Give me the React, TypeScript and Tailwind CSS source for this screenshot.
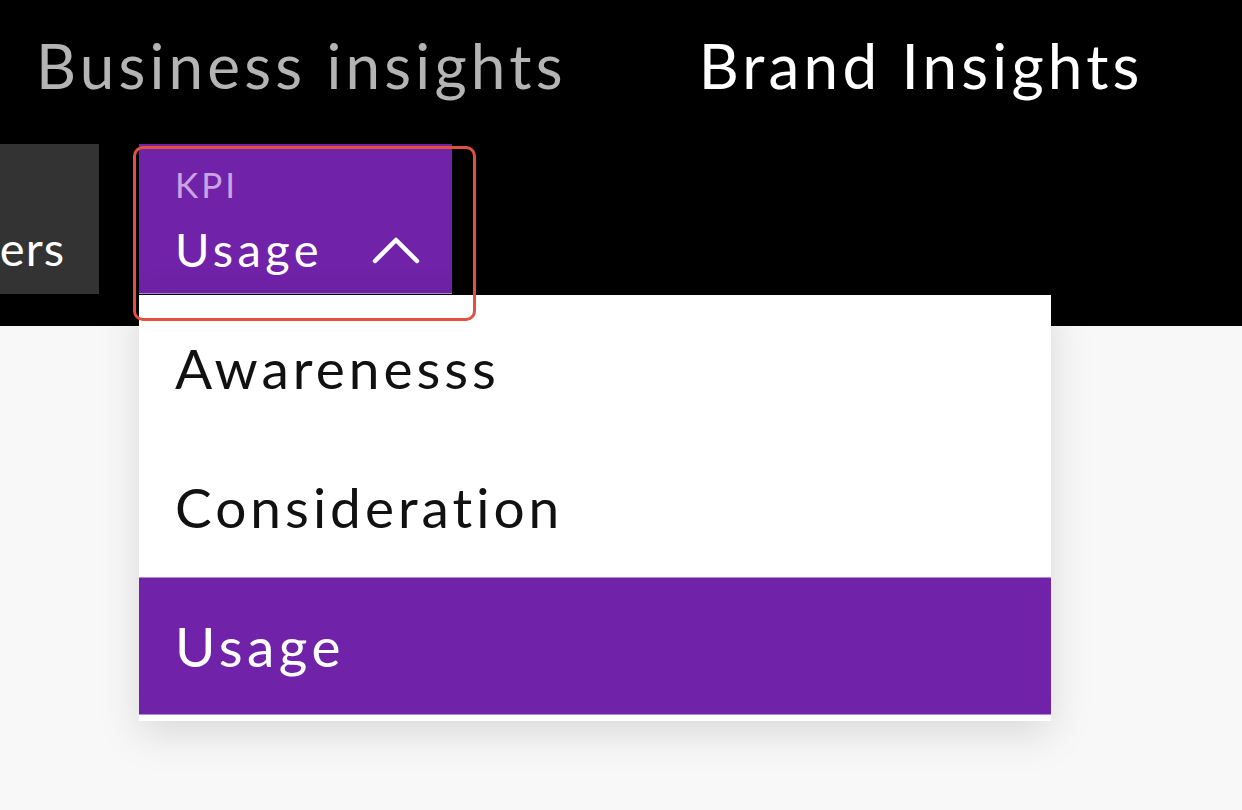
import React from "react";

const font = { fontFamily: "Lato, 'Open Sans', sans-serif" };

export default function App() {
  return (
    <div className="relative w-[1242px] h-[810px] overflow-hidden bg-[#f8f8f8]" style={font}>
      <div className="bg-black h-[326px] flex flex-col">
        <div className="flex items-end h-[96px] pl-[36px]">
          <span className="text-[62px] leading-none text-[#b4b4b4] tracking-[4.2px]">Business insights</span>
          <span className="ml-[132px] text-[62px] leading-none text-white tracking-[4.2px]">Brand Insights</span>
        </div>
        <div className="flex mt-[48px] h-[150px]">
          <div className="w-[99px] bg-[#333333] flex items-end justify-end pr-[34px] pb-[22px]">
            <span className="text-[47px] leading-none text-white tracking-[1px]">ers</span>
          </div>
          <button className="ml-[40px] w-[313px] bg-[#7022a8] border-b border-[#b48bd6] flex flex-col items-start pl-[36px] pt-[23px] text-left">
            <span className="text-[35px] leading-none text-[#c9a3e2] tracking-[3px]">KPI</span>
            <div className="flex items-center w-full mt-[24px]">
              <span className="text-[47px] leading-none text-white tracking-[4.4px]">Usage</span>
              <svg className="ml-auto mr-[32px]" width="48" height="28" viewBox="0 0 48 28" fill="none">
                <path d="M3 25 L24 4 L45 25" stroke="white" strokeWidth="4.5" strokeLinecap="round" strokeLinejoin="round" />
              </svg>
            </div>
          </button>
        </div>
      </div>

      <div className="absolute left-[139px] top-[295px] w-[912px] bg-white pt-[4px] pb-[6px] shadow-[0_12px_40px_rgba(0,0,0,0.13)]">
        <div className="h-[139px] flex items-center pl-[36px]">
          <span className="text-[55px] leading-none text-[#111] tracking-[4px]">Awarenesss</span>
        </div>
        <div className="h-[139px] flex items-center pl-[36px]">
          <span className="text-[55px] leading-none text-[#111] tracking-[4px]">Consideration</span>
        </div>
        <div className="h-[138px] flex items-center pl-[36px] bg-[#7022a8] border-y border-[#b48bd6]">
          <span className="text-[55px] leading-none text-white tracking-[4.5px]">Usage</span>
        </div>
      </div>

      <div className="absolute left-[133px] top-[146px] w-[343px] h-[175px] border-[3px] border-[#e2513f] rounded-[10px]" />
    </div>
  );
}
